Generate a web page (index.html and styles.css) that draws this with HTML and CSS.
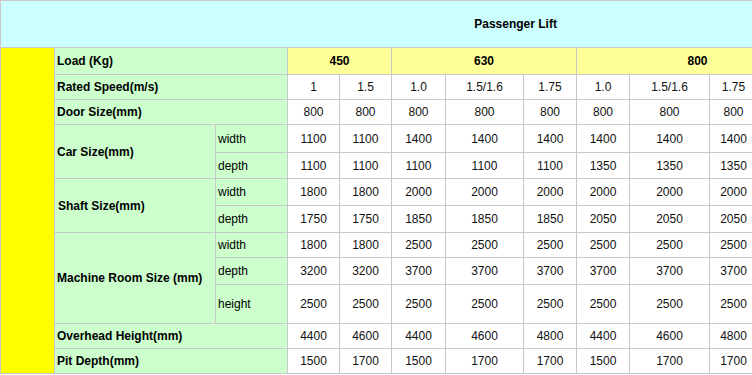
FILE: index.html
```html
<!DOCTYPE html>
<html>
<head>
<meta charset="utf-8">
<link rel="stylesheet" href="styles.css">
</head>
<body>
<div class="wrap">
<table class="spec">
<colgroup>
<col class="w54"><col class="w161"><col class="w72">
<col class="w52"><col class="w52">
<col class="w54"><col class="w78"><col class="w53">
<col class="w53"><col class="w80"><col class="w48"><col class="w61">
<col class="w212">
</colgroup>
<tr class="h47"><td class="title" colspan="13">Passenger Lift</td></tr>
<tr class="h27">
<td class="side" rowspan="12"></td>
<td class="lab" colspan="2">Load (Kg)</td>
<td class="load" colspan="2">450</td>
<td class="load" colspan="3">630</td>
<td class="load" colspan="4">800</td>
<td class="load"></td>
</tr>
<tr class="h25">
<td class="lab" colspan="2">Rated Speed(m/s)</td>
<td>1</td><td>1.5</td><td>1.0</td><td>1.5/1.6</td><td>1.75</td><td>1.0</td><td>1.5/1.6</td><td>1.75</td><td></td><td></td>
</tr>
<tr class="h25">
<td class="lab" colspan="2">Door Size(mm)</td>
<td>800</td><td>800</td><td>800</td><td>800</td><td>800</td><td>800</td><td>800</td><td>800</td><td></td><td></td>
</tr>
<tr class="h28">
<td class="lab" rowspan="2">Car Size(mm)</td><td class="sub">width</td>
<td>1100</td><td>1100</td><td>1400</td><td>1400</td><td>1400</td><td>1400</td><td>1400</td><td>1400</td><td></td><td></td>
</tr>
<tr class="h26">
<td class="sub">depth</td>
<td>1100</td><td>1100</td><td>1100</td><td>1100</td><td>1100</td><td>1350</td><td>1350</td><td>1350</td><td></td><td></td>
</tr>
<tr class="h27">
<td class="lab ind" rowspan="2">Shaft Size(mm)</td><td class="sub">width</td>
<td>1800</td><td>1800</td><td>2000</td><td>2000</td><td>2000</td><td>2000</td><td>2000</td><td>2000</td><td></td><td></td>
</tr>
<tr class="h27">
<td class="sub">depth</td>
<td>1750</td><td>1750</td><td>1850</td><td>1850</td><td>1850</td><td>2050</td><td>2050</td><td>2050</td><td></td><td></td>
</tr>
<tr class="h25">
<td class="lab" rowspan="3">Machine Room Size (mm)</td><td class="sub">width</td>
<td>1800</td><td>1800</td><td>2500</td><td>2500</td><td>2500</td><td>2500</td><td>2500</td><td>2500</td><td></td><td></td>
</tr>
<tr class="h27">
<td class="sub">depth</td>
<td>3200</td><td>3200</td><td>3700</td><td>3700</td><td>3700</td><td>3700</td><td>3700</td><td>3700</td><td></td><td></td>
</tr>
<tr class="h39">
<td class="sub">height</td>
<td>2500</td><td>2500</td><td>2500</td><td>2500</td><td>2500</td><td>2500</td><td>2500</td><td>2500</td><td></td><td></td>
</tr>
<tr class="h25">
<td class="lab" colspan="2">Overhead Height(mm)</td>
<td>4400</td><td>4600</td><td>4400</td><td>4600</td><td>4800</td><td>4400</td><td>4600</td><td>4800</td><td></td><td></td>
</tr>
<tr class="h25">
<td class="lab" colspan="2">Pit Depth(mm)</td>
<td>1500</td><td>1700</td><td>1500</td><td>1700</td><td>1700</td><td>1500</td><td>1700</td><td>1700</td><td></td><td></td>
</tr>
</table>
</div>
</body>
</html>
```
FILE: styles.css
```css
html, body {
  margin: 0;
  padding: 0;
  background: #ffffff;
  overflow: hidden;
}
.wrap {
  width: 752px;
  height: 375px;
  overflow: hidden;
}
.spec {
  border-collapse: collapse;
  table-layout: fixed;
  width: 1030px;
  font-family: "Liberation Sans", Arial, sans-serif;
  font-size: 12px;
  color: #111111;
}
.spec td {
  border: 1px solid #c8c8c8;
  padding: 0 2px;
  text-align: center;
  vertical-align: middle;
  white-space: nowrap;
  overflow: hidden;
}
.w48 { width: 48px; }
.w52 { width: 52px; }
.w53 { width: 53px; }
.w54 { width: 54px; }
.w61 { width: 61px; }
.w72 { width: 72px; }
.w78 { width: 78px; }
.w80 { width: 80px; }
.w161 { width: 161px; }
.w212 { width: 212px; }
.h25 { height: 25px; }
.h26 { height: 26px; }
.h27 { height: 27px; }
.h28 { height: 28px; }
.h39 { height: 39px; }
.h47 { height: 47px; }
.spec td.title {
  background: #ccffff;
  font-weight: bold;
  color: #000000;
}
.spec td.side {
  background: #ffff00;
}
.spec td.lab {
  background: #ccffcc;
  font-weight: bold;
  text-align: left;
  color: #000000;
}
.spec td.ind {
  padding-left: 3px;
}
.spec td.sub {
  background: #ccffcc;
  text-align: left;
  color: #000000;
}
.spec td.load {
  background: #ffff99;
  font-weight: bold;
  color: #000000;
}
```
